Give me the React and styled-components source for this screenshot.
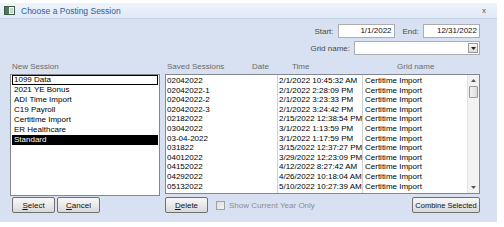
import React from 'react'
import styled, { createGlobalStyle } from 'styled-components'

const GlobalStyle = createGlobalStyle`
	body {
		margin: 0;
		background: #ffffff;
		font-family: "Liberation Sans", Arial, sans-serif;
	}
`

const newSessions = [
	'1099 Data',
	'2021 YE Bonus',
	'ADI Time Import',
	'C19 Payroll',
	'Certitime Import',
	'ER Healthcare',
	'Standard',
]

const savedSessions = [
	['02042022', '2/1/2022 10:45:32 AM'],
	['02042022-1', '2/1/2022 2:28:09 PM'],
	['02042022-2', '2/1/2022 3:23:33 PM'],
	['02042022-3', '2/1/2022 3:24:42 PM'],
	['02182022', '2/15/2022 12:38:54 PM'],
	['03042022', '3/1/2022 1:13:59 PM'],
	['03-04-2022', '3/1/2022 1:17:59 PM'],
	['031822', '3/15/2022 12:37:27 PM'],
	['04012022', '3/29/2022 12:23:09 PM'],
	['04152022', '4/12/2022 8:27:42 AM'],
	['04292022', '4/26/2022 10:18:04 AM'],
	['05132022', '5/10/2022 10:27:39 AM'],
]

const App = () => {
	return (
		<>
			<GlobalStyle />
			<Page>
				<Window>
					<TitleBar>
						<svg width='11' height='9' viewBox='0 0 11 9'>
							<rect x='0.5' y='0.5' width='10' height='8' fill='#f4f6f4' stroke='#3c5a46' />
							<rect x='1' y='1' width='4' height='7' fill='#4f7a5a' />
							<rect x='6' y='2' width='3' height='5' fill='#c9d4cc' />
						</svg>
						<Title>Choose a Posting Session</Title>
						<Close>x</Close>
					</TitleBar>
					<Body>
						<TopForm>
							<FormRow>
								<Label>Start:</Label>
								<DateInput>1/1/2022</DateInput>
								<Label>End:</Label>
								<DateInput>12/31/2022</DateInput>
							</FormRow>
							<FormRow>
								<Label>Grid name:</Label>
								<Combo>
									<ComboButton>
										<svg width='5' height='3' viewBox='0 0 5 3'>
											<path d='M0 0h5L2.5 3z' fill='#222' />
										</svg>
									</ComboButton>
								</Combo>
							</FormRow>
						</TopForm>
						<Main>
							<LeftPanel>
								<Header>
									<HeadLabel>New Session</HeadLabel>
								</Header>
								<ListBox>
									{newSessions.map((s, i) => (
										<ListItem
											key={s}
											$focused={i === 0}
											$selected={s === 'Standard'}
										>
											{s}
										</ListItem>
									))}
								</ListBox>
								<ButtonRow>
									<Button>
										<u>S</u>elect
									</Button>
									<Button>
										<u>C</u>ancel
									</Button>
								</ButtonRow>
							</LeftPanel>
							<RightPanel>
								<Header>
									<HeadLabel $w={85}>Saved Sessions</HeadLabel>
									<HeadLabel $w={40}>Date</HeadLabel>
									<HeadLabel $w={105}>Time</HeadLabel>
									<HeadLabel>Grid name</HeadLabel>
								</Header>
								<Grid>
									<Rows>
										{savedSessions.map(([name, time]) => (
											<Row key={name}>
												<NameCell>{name}</NameCell>
												<TimeCell>{time}</TimeCell>
												<GridCell>Certitime Import</GridCell>
											</Row>
										))}
										<PartialRow />
									</Rows>
									<ScrollBar>
										<Arrow>
											<svg width='5' height='3' viewBox='0 0 5 3'>
												<path d='M0 3h5L2.5 0z' fill='#555' />
											</svg>
										</Arrow>
										<Thumb />
										<Track />
										<Arrow>
											<svg width='5' height='3' viewBox='0 0 5 3'>
												<path d='M0 0h5L2.5 3z' fill='#555' />
											</svg>
										</Arrow>
									</ScrollBar>
								</Grid>
								<BottomRow>
									<Button>
										<u>D</u>elete
									</Button>
									<CheckBox />
									<Disabled>Show Current Year Only</Disabled>
									<Spacer />
									<Button $wide>Combine Selected</Button>
								</BottomRow>
							</RightPanel>
						</Main>
					</Body>
				</Window>
			</Page>
		</>
	)
}

export default App

const Page = styled.div`
	width: 504px;
	height: 227px;
	padding-top: 3px;
	box-sizing: border-box;
	overflow: hidden;
`
const Window = styled.div`
	width: 497px;
	height: 219px;
	background: #d7e1f1;
	display: flex;
	flex-direction: column;
`
const TitleBar = styled.div`
	height: 15px;
	display: flex;
	align-items: center;
	padding-left: 4px;
	background: linear-gradient(#eef4fb, #dfe8f6);
	border-bottom: 1px solid #c6d4e9;
`
const Title = styled.span`
	margin-left: 6px;
	font-size: 8.5px;
	color: #2c5d9c;
	flex: 1;
`
const Close = styled.span`
	font-size: 8px;
	color: #555;
	margin-right: 11px;
`
const Body = styled.div`
	padding: 0 17px 0 10px;
	display: flex;
	flex-direction: column;
`
const TopForm = styled.div`
	display: flex;
	flex-direction: column;
	align-items: flex-end;
	gap: 3px;
	margin-top: 5px;
`
const FormRow = styled.div`
	display: flex;
	align-items: center;
	height: 14px;
`
const Label = styled.span`
	font-size: 8px;
	color: #4a4a4a;
	margin: 0 4px 0 8px;
`
const DateInput = styled.div`
	width: 57px;
	height: 14px;
	box-sizing: border-box;
	background: #fff;
	border: 1px solid #abadb3;
	font-size: 8px;
	color: #111;
	text-align: right;
	padding: 1px 2px 0 0;
`
const Combo = styled.div`
	width: 126px;
	height: 14px;
	box-sizing: border-box;
	background: #fff;
	border: 1px solid #abadb3;
	display: flex;
	justify-content: flex-end;
	padding: 1px;
`
const ComboButton = styled.div`
	width: 10px;
	display: flex;
	align-items: center;
	justify-content: center;
	background: linear-gradient(#f6f6f6, #dcdcdc);
	border: 1px solid #9a9a9a;
	box-sizing: border-box;
`
const Main = styled.div`
	display: flex;
	gap: 5px;
`
const LeftPanel = styled.div`
	width: 150px;
	display: flex;
	flex-direction: column;
`
const RightPanel = styled.div`
	width: 315px;
	display: flex;
	flex-direction: column;
`
const Header = styled.div`
	height: 19px;
	display: flex;
	align-items: flex-end;
	padding: 0 0 3px 2px;
	box-sizing: border-box;
`
const HeadLabel = styled.span`
	font-size: 8px;
	color: #6b6b6b;
	width: ${(p) => (p.$w ? `${p.$w}px` : 'auto')};
	flex-shrink: 0;
`
const ListBox = styled.div`
	height: 122px;
	box-sizing: border-box;
	background: #fff;
	border: 1px solid #828790;
	padding: 0 1px;
`
const ListItem = styled.div`
	height: 10px;
	line-height: 10px;
	font-size: 8px;
	padding-left: 2px;
	color: ${(p) => (p.$selected ? '#fff' : '#000')};
	background: ${(p) => (p.$selected ? '#000' : 'transparent')};
	outline: ${(p) => (p.$focused ? '1px solid #000' : 'none')};
	outline-offset: -1px;
`
const ButtonRow = styled.div`
	display: flex;
	gap: 2px;
	padding-left: 2px;
	margin-top: 1px;
`
const Button = styled.div`
	width: ${(p) => (p.$wide ? '68px' : '43px')};
	height: 16px;
	box-sizing: border-box;
	display: flex;
	align-items: center;
	justify-content: center;
	font-size: ${(p) => (p.$wide ? '7.5px' : '8px')};
	white-space: nowrap;
	color: #111;
	background: linear-gradient(#f7f7f7 0%, #eaeaea 50%, #d8d8d8 100%);
	border: 1px solid #707070;
	border-radius: 2px;
	u {
		text-decoration-thickness: 1px;
	}
`
const Grid = styled.div`
	height: 120px;
	box-sizing: border-box;
	background: #fff;
	border: 1px solid #828790;
	display: flex;
	overflow: hidden;
`
const Rows = styled.div`
	flex: 1;
	overflow: hidden;
	padding-top: 1px;
	background:
		linear-gradient(#d0d0d0, #d0d0d0) 111px 0 / 1px 100% no-repeat,
		linear-gradient(#d0d0d0, #d0d0d0) 196px 0 / 1px 100% no-repeat;
`
const Row = styled.div`
	display: flex;
	height: 9.6px;
	line-height: 9.6px;
	font-size: 8px;
	color: #000;
	white-space: nowrap;
`
const PartialRow = styled.div`
	height: 2px;
	margin-top: 2px;
	background:
		linear-gradient(#555, #555) 2px 0 / 32px 1px no-repeat,
		linear-gradient(#555, #555) 113px 0 / 80px 1px no-repeat,
		linear-gradient(#555, #555) 198px 0 / 52px 1px no-repeat;
`
const NameCell = styled.span`
	width: 113px;
	padding-left: 1px;
	box-sizing: border-box;
`
const TimeCell = styled.span`
	width: 85px;
	overflow: hidden;
`
const GridCell = styled.span`
	flex: 1;
	padding-left: 1px;
`
const ScrollBar = styled.div`
	width: 12px;
	display: flex;
	flex-direction: column;
	background: #f2f2f2;
	border-left: 1px solid #e4e4e4;
	box-sizing: border-box;
`
const Arrow = styled.div`
	height: 11px;
	display: flex;
	align-items: center;
	justify-content: center;
`
const Thumb = styled.div`
	height: 10px;
	margin: 0 1px;
	border: 1px solid #9a9a9a;
	border-radius: 1px;
	background: linear-gradient(90deg, #f4f4f4, #dcdcdc);
`
const Track = styled.div`
	flex: 1;
`
const BottomRow = styled.div`
	display: flex;
	align-items: center;
	margin-top: 3px;
	height: 16px;
`
const CheckBox = styled.div`
	width: 9px;
	height: 9px;
	box-sizing: border-box;
	border: 1px solid #a0a0a0;
	background: linear-gradient(135deg, #dcdcdc, #f4f4f4);
	margin-left: 8px;
`
const Disabled = styled.span`
	font-size: 8px;
	color: #8d8d8d;
	margin-left: 4px;
`
const Spacer = styled.div`
	flex: 1;
`
